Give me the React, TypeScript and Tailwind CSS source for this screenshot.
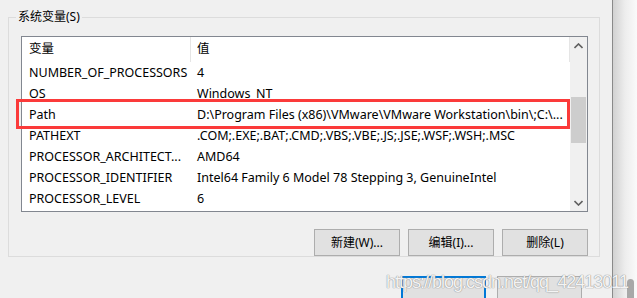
import React from "react";

const rows: [string, string][] = [
  ["NUMBER_OF_PROCESSORS", "4"],
  ["OS", "Windows_NT"],
  ["Path", "D:\\Program Files (x86)\\VMware\\VMware Workstation\\bin\\;C:\\..."],
  ["PATHEXT", ".COM;.EXE;.BAT;.CMD;.VBS;.VBE;.JS;.JSE;.WSF;.WSH;.MSC"],
  ["PROCESSOR_ARCHITECT...", "AMD64"],
  ["PROCESSOR_IDENTIFIER", "Intel64 Family 6 Model 78 Stepping 3, GenuineIntel"],
  ["PROCESSOR_LEVEL", "6"],
];

const font = "font-['Noto_Sans','Noto_Sans_CJK_SC',sans-serif]";

export default function App() {
  return (
    <div className={`relative w-[637px] h-[298px] overflow-hidden bg-[#f0f0f0] flex text-[12.5px] text-black ${font}`}>
      <div className="w-[612px] shrink-0 flex flex-col">
        {/* group box */}
        <div className="relative ml-[8px] mt-[17px] w-[592px] h-[256px] border border-[#dcdcdc] pt-[18px] pl-[12px]">
          <div className="absolute left-[7px] top-[-10px] bg-[#f0f0f0] px-[2px] leading-[18px] text-[12px]">系统变量(S)</div>
          {/* list */}
          <div className="relative w-[567px] h-[176px] border border-[#828790] bg-white flex">
            <div className="w-[548px] flex flex-col">
              <div className="h-[25px] flex items-center">
                <div className="w-[169px] h-full pl-[7px] flex items-center border-r border-[#e5e5e5]">变量</div>
                <div className="flex-1 h-full pl-[6px] flex items-center border-r border-[#e5e5e5]">值</div>
              </div>
              {rows.map(([k, v]) => (
                <div key={k} className="h-[21px] pt-px flex items-center whitespace-nowrap">
                  <div className="w-[169px] pl-[7px]">{k}</div>
                  <div className="flex-1 pl-[6px] overflow-hidden">{v}</div>
                </div>
              ))}
            </div>
            {/* scrollbar */}
            <div className="w-[17px] bg-[#f0f0f0] flex flex-col">
              <div className="h-[17px] flex items-center justify-center">
                <svg width="9" height="6" viewBox="0 0 9 6"><path d="M0.5 5 L4.5 1 L8.5 5" fill="none" stroke="#606060" strokeWidth="1.6" /></svg>
              </div>
              <div className="h-[43px]" />
              <div className="h-[46px] w-[15px] ml-px bg-[#cdcdcd]" />
              <div className="flex-1" />
              <div className="h-[17px] flex items-center justify-center">
                <svg width="9" height="6" viewBox="0 0 9 6"><path d="M0.5 1 L4.5 5 L8.5 1" fill="none" stroke="#606060" strokeWidth="1.6" /></svg>
              </div>
            </div>
            {/* highlight */}
            <div className="absolute left-[-6px] top-[62px] w-[554px] h-[30px] border-[3px] border-[#fb3a3a]" />
          </div>
          <div className="mt-[17px] w-[567px] flex justify-end gap-[8px] text-[12px]">
            {["新建(W)...", "编辑(I)...", "删除(L)"].map((t) => (
              <div key={t} className="w-[86px] h-[27px] border border-[#adadad] bg-[#e1e1e1] flex items-center justify-center">{t}</div>
            ))}
          </div>
        </div>
        <div className="mt-[19px] flex gap-[11px] pl-[401px]">
          <div className="w-[85px] h-[30px] border-2 border-[#0078d7] bg-[#e1e1e1]" />
          <div className="w-[85px] h-[30px] border border-[#adadad] bg-[#e1e1e1]" />
        </div>
      </div>
      <div className="w-px bg-[#8a8a8a]" />
      <div className="flex-1 relative bg-gradient-to-r from-[#d2d2d2] via-[#ededed] to-[#fafafa]">
        <div className="absolute left-[14px] top-[279px] w-[7px] h-[30px] rounded-full bg-[#a8a8a8]" />
      </div>
      <div className="absolute left-[386px] top-[270px] text-[18px] leading-[24px] tracking-[-1px] font-['Liberation_Sans',sans-serif] text-white/90 [text-shadow:0_0_1px_#8a8a8a,0_0_1px_#8a8a8a] whitespace-nowrap">
        https://blog.csdn.net/qq_42413011
      </div>
    </div>
  );
}
